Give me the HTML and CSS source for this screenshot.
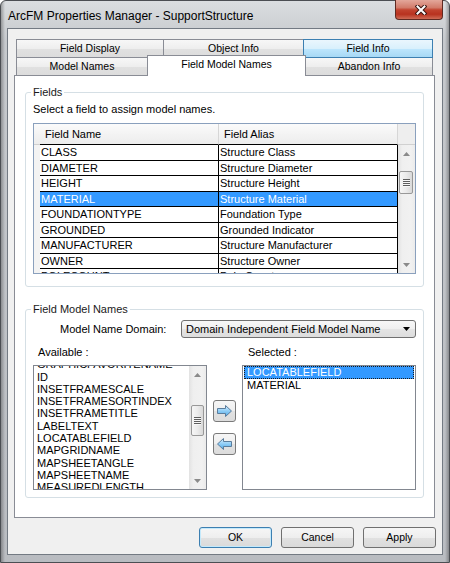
FILE: index.html
```html
<!DOCTYPE html>
<html>
<head>
<meta charset="utf-8">
<title>ArcFM Properties Manager</title>
<link rel="stylesheet" href="styles.css">
</head>
<body>
<div class="window">
  <div class="titlebar">
    <div class="title">ArcFM Properties Manager - SupportStructure</div>
    <div class="close">
      <svg width="12" height="10" viewBox="0 0 12 10">
        <path d="M2.5 1.5 L9.5 8.5 M9.5 1.5 L2.5 8.5" stroke="#3a1510" stroke-width="4" stroke-linecap="square"/>
        <path d="M2.5 1.5 L9.5 8.5 M9.5 1.5 L2.5 8.5" stroke="#ffffff" stroke-width="2" stroke-linecap="square"/>
      </svg>
    </div>
  </div>
  <div class="client">
    <div class="tabs">
      <div class="tabrow">
        <div class="tab t-fd">Field Display</div>
        <div class="tab t-oi">Object Info</div>
        <div class="tab t-fi hot">Field Info</div>
      </div>
      <div class="tabrow row2">
        <div class="tab t-mn">Model Names</div>
        <div class="tab t-fmn sel">Field Model Names</div>
        <div class="tab t-ai">Abandon Info</div>
      </div>
    </div>
    <div class="panel">
      <fieldset class="group g-fields">
        <legend>Fields</legend>
        <div class="hint">Select a field to assign model names.</div>
        <div class="grid">
          <div class="ghead">
            <div class="rh"></div>
            <div class="hc c1">Field Name</div>
            <div class="hc c2">Field Alias</div>
            <div class="hfill"></div>
          </div>
          <div class="gbody">
            <div class="rows">
              <div class="row"><div class="rh"></div><div class="cell c1">CLASS</div><div class="cell c2">Structure Class</div></div>
              <div class="row"><div class="rh"></div><div class="cell c1">DIAMETER</div><div class="cell c2">Structure Diameter</div></div>
              <div class="row"><div class="rh"></div><div class="cell c1">HEIGHT</div><div class="cell c2">Structure Height</div></div>
              <div class="row on"><div class="rh"></div><div class="cell c1">MATERIAL</div><div class="cell c2">Structure Material</div></div>
              <div class="row"><div class="rh"></div><div class="cell c1">FOUNDATIONTYPE</div><div class="cell c2">Foundation Type</div></div>
              <div class="row"><div class="rh"></div><div class="cell c1">GROUNDED</div><div class="cell c2">Grounded Indicator</div></div>
              <div class="row"><div class="rh"></div><div class="cell c1">MANUFACTURER</div><div class="cell c2">Structure Manufacturer</div></div>
              <div class="row"><div class="rh"></div><div class="cell c1">OWNER</div><div class="cell c2">Structure Owner</div></div>
              <div class="row"><div class="rh"></div><div class="cell c1">POLECOUNT</div><div class="cell c2">Pole Count</div></div>
            </div>
            <div class="vsb">
              <div class="sb-btn"><svg width="7" height="4" viewBox="0 0 7 4"><polygon points="0,4 3.5,0 7,4" fill="#8a8a8a"/></svg></div>
              <div class="sb-track"><div class="thumb"><div class="grip"></div></div></div>
              <div class="sb-btn"><svg width="7" height="4" viewBox="0 0 7 4"><polygon points="0,0 7,0 3.5,4" fill="#8a8a8a"/></svg></div>
            </div>
          </div>
        </div>
      </fieldset>
      <fieldset class="group g-models">
        <legend>Field Model Names</legend>
        <div class="domain-row">
          <span class="domain-label">Model Name Domain:</span>
          <div class="combo">
            <span class="combo-text">Domain Independent Field Model Name</span>
            <svg width="7" height="4" viewBox="0 0 7 4"><polygon points="0,0 7,0 3.5,4" fill="#000"/></svg>
          </div>
        </div>
        <div class="labels">
          <div class="lbl-av">Available :</div>
          <div class="lbl-sel">Selected :</div>
        </div>
        <div class="lists">
          <div class="listbox avail">
            <div class="items">
              <div class="item first">GRAPHICFAVORITENAME</div>
              <div class="item">ID</div>
              <div class="item">INSETFRAMESCALE</div>
              <div class="item">INSETFRAMESORTINDEX</div>
              <div class="item">INSETFRAMETITLE</div>
              <div class="item">LABELTEXT</div>
              <div class="item">LOCATABLEFIELD</div>
              <div class="item">MAPGRIDNAME</div>
              <div class="item">MAPSHEETANGLE</div>
              <div class="item">MAPSHEETNAME</div>
              <div class="item">MEASUREDLENGTH</div>
            </div>
            <div class="vsb">
              <div class="sb-btn"><svg width="7" height="4" viewBox="0 0 7 4"><polygon points="0,4 3.5,0 7,4" fill="#8a8a8a"/></svg></div>
              <div class="sb-track"><div class="thumb"><div class="grip"></div></div></div>
              <div class="sb-btn"><svg width="7" height="4" viewBox="0 0 7 4"><polygon points="0,0 7,0 3.5,4" fill="#8a8a8a"/></svg></div>
            </div>
          </div>
          <div class="movers">
            <div class="mv">
              <svg width="17" height="12" viewBox="0 0 17 12">
                <defs>
                  <linearGradient id="ag" x1="0" y1="0" x2="0" y2="1">
                    <stop offset="0" stop-color="#d8f0ff"/>
                    <stop offset="0.5" stop-color="#8fcdf6"/>
                    <stop offset="1" stop-color="#4ea8e6"/>
                  </linearGradient>
                </defs>
                <polygon points="1.5,3.5 9.5,3.5 9.5,0.5 15.5,6 9.5,11.5 9.5,8.5 1.5,8.5" fill="url(#ag)" stroke="#5b7d9c" stroke-width="1" stroke-linejoin="round"/>
              </svg>
            </div>
            <div class="mv">
              <svg width="17" height="12" viewBox="0 0 17 12">
                <polygon points="15.5,3.5 7.5,3.5 7.5,0.5 1.5,6 7.5,11.5 7.5,8.5 15.5,8.5" fill="url(#ag)" stroke="#5b7d9c" stroke-width="1" stroke-linejoin="round"/>
              </svg>
            </div>
          </div>
          <div class="listbox chosen">
            <div class="items">
              <div class="item on">LOCATABLEFIELD</div>
              <div class="item">MATERIAL</div>
            </div>
          </div>
        </div>
      </fieldset>
    </div>
    <div class="buttons">
      <div class="btn default">OK</div>
      <div class="btn">Cancel</div>
      <div class="btn">Apply</div>
    </div>
  </div>
</div>
</body>
</html>
```
FILE: styles.css
```css
* { box-sizing: border-box; }
html, body { margin: 0; padding: 0; }
body {
  width: 450px;
  height: 563px;
  overflow: hidden;
  font-family: "Liberation Sans", Arial, sans-serif;
  font-size: 11px;
  color: #000;
  background: #ffffff;
}

.window {
  width: 450px;
  height: 563px;
  border: 1px solid #4b4e53;
  border-radius: 6px 6px 0 0;
  padding: 0 6px 7px;
  display: flex;
  flex-direction: column;
  background:
    linear-gradient(to right, rgba(0,0,0,0.28), rgba(0,0,0,0) 4px, rgba(0,0,0,0) calc(100% - 4px), rgba(0,0,0,0.28)),
    linear-gradient(#dadde0, #c6c9cd 40px, #b9bcc1);
}

.titlebar {
  height: 27px;
  flex: none;
  display: flex;
  align-items: flex-start;
}
.title {
  margin: 8px 0 0 1px;
  font-size: 12px;
  line-height: 14px;
  color: #000;
}
.close {
  margin: -1px 0 0 auto;
  width: 48px;
  height: 20px;
  border: 1px solid #5e2a22;
  border-top: none;
  border-radius: 0 0 4px 4px;
  background: linear-gradient(#e3a79b 0%, #d27b6a 40%, #c2432f 52%, #b8321f 75%, #cf6b55 100%);
  display: flex;
  align-items: center;
  justify-content: center;
  padding-left: 3px;
}

.client {
  flex: 1;
  background: #f0f0f0;
  border: 1px solid #737a83;
  padding: 10px 6px 0 6px;
}

.tabs {
  margin-left: 2px;
  width: 417px;
}
.tabrow {
  display: flex;
  height: 19px;
}
.row2 { margin-top: -1px; }
.tab {
  height: 19px;
  flex: none;
  border: 1px solid #898c95;
  line-height: 17px;
  text-align: center;
  font-size: 10.5px;
  background: linear-gradient(#f7f7f7, #eeeeee 50%, #e1e1e1 51%, #dcdcdc);
}
.tab + .tab { margin-left: -1px; }
.t-fd { width: 148px; }
.t-oi { width: 141px; }
.t-fi { width: 130px; }
.t-mn { width: 132px; }
.t-fmn { width: 159px; }
.t-ai { width: 128px; }
.hot {
  position: relative;
  z-index: 1;
  border-color: #3c7fb1;
  background: linear-gradient(#eaf6fd, #d9f0fc 50%, #bee6fd 51%, #a7d9f5);
}
.sel {
  position: relative;
  z-index: 2;
  height: 21px;
  margin-top: -2px;
  border-bottom: none;
  background: #ffffff;
}

.panel {
  width: 421px;
  height: 443px;
  margin-top: -1px;
  background: #ffffff;
  border: 1px solid #898c95;
}

.group {
  margin: 10px 10px 0;
  padding: 0 7px;
  border: 1px solid #d5dfe5;
  border-radius: 3px;
  min-width: 0;
}
.group legend {
  padding: 0 2px;
  margin-left: -2px;
  font-size: 11px;
  line-height: 13px;
  color: #1a1a1a;
}
.g-fields { padding-bottom: 12px; }
.g-models { margin-top: 16px; padding-bottom: 7px; }

.hint {
  margin-top: 4px;
  line-height: 13px;
}

.grid {
  margin-top: 7px;
  height: 151px;
  border: 1px solid #8aa0bd;
  display: flex;
  flex-direction: column;
  background: #ffffff;
}
.ghead {
  height: 21px;
  flex: none;
  display: flex;
  background: linear-gradient(#fbfbfb, #f2f2f2 55%, #ececec);
}
.rh { width: 6px; flex: none; }
.ghead .rh { border-bottom: 1px solid #d0d0d0; }
.hc {
  line-height: 20px;
  border-bottom: 1px solid #000;
  border-right: 1px solid #d6d6d6;
  padding-left: 5px;
}
.c1 { width: 179px; flex: none; }
.c2 { width: 179px; flex: none; }
.hfill { flex: 1; border-bottom: 1px solid #d0d0d0; background: #eeeeee; }

.gbody {
  flex: 1;
  min-height: 0;
  display: flex;
}
.rows {
  flex: 1;
  overflow: hidden;
}
.row {
  display: flex;
  height: 15.5px;
}
.row .rh { background: #f3f3f3; }
.cell {
  border-right: 1px solid #000;
  border-bottom: 1px solid #000;
  line-height: 14.5px;
  padding-left: 1px;
  white-space: nowrap;
  overflow: hidden;
}
.row.on .cell {
  background: #3399ff;
  color: #ffffff;
}

.vsb {
  width: 17px;
  flex: none;
  display: flex;
  flex-direction: column;
  background: linear-gradient(to right, #e2e2e2, #efefef 25%, #f1f1f1 75%, #ebebeb);
}
.sb-btn {
  height: 17px;
  flex: none;
  display: flex;
  align-items: center;
  justify-content: center;
}
.sb-track { flex: 1; min-height: 0; }
.thumb {
  margin: 9px 2px 0 1px;
  height: 23px;
  border: 1px solid #989898;
  border-radius: 2px;
  background: linear-gradient(to right, #f6f6f6, #ebebeb 50%, #d9d9d9);
  display: flex;
  align-items: center;
  justify-content: center;
}
.grip {
  width: 7px;
  height: 8px;
  background: repeating-linear-gradient(#5e5e5e 0 1px, #f8f8f8 1px 2px);
}
.avail .thumb {
  margin: 22px 2px 0 2px;
  height: 31px;
}

.domain-row {
  display: flex;
  align-items: center;
  margin-top: 4px;
  height: 18px;
}
.domain-label {
  margin-left: 27px;
  line-height: 18px;
}
.combo {
  margin-left: auto;
  width: 235px;
  height: 18px;
  border: 1px solid #707070;
  border-radius: 3px;
  background: linear-gradient(#f7f7f7, #efefef 50%, #e4e4e4 51%, #dddddd);
  display: flex;
  align-items: center;
  padding: 0 5px 0 4px;
}
.combo-text {
  flex: 1;
  line-height: 16px;
  white-space: nowrap;
}

.labels {
  display: flex;
  margin-top: 8px;
  line-height: 13px;
}
.lbl-av { width: 209px; padding-left: 5px; }
.lbl-sel { padding-left: 6px; }

.lists {
  display: flex;
  gap: 6px;
  margin-top: 6px;
  height: 125px;
}
.listbox {
  width: 174px;
  height: 125px;
  flex: none;
  border: 1px solid #828790;
  background: #ffffff;
  display: flex;
  overflow: hidden;
}
.listbox .items {
  flex: 1;
  min-width: 0;
  overflow: hidden;
}
.avail .items { padding-left: 3px; }
.avail .item {
  line-height: 12.3px;
  height: 12.3px;
  white-space: nowrap;
}
.avail .item.first { margin-top: -7.75px; }
.chosen .items { padding: 0 1px; }
.chosen .item {
  height: 12.6px;
  line-height: 12.6px;
  padding-left: 3px;
  white-space: nowrap;
}
.chosen .item.on {
  background: #3399ff;
  color: #ffffff;
  outline: 1px dotted #1a1a1a;
  outline-offset: -1px;
}

.movers {
  width: 23px;
  flex: none;
  display: flex;
  flex-direction: column;
  justify-content: center;
  gap: 11px;
}
.mv {
  height: 22px;
  border: 1px solid #7a7a7a;
  border-radius: 3px;
  background: linear-gradient(#f6f6f6, #eeeeee 50%, #e2e2e2 51%, #dcdcdc);
  display: flex;
  align-items: center;
  justify-content: center;
}

.buttons {
  display: flex;
  justify-content: flex-end;
  gap: 9px;
  margin-top: 9px;
}
.btn {
  width: 73px;
  height: 21px;
  border: 1px solid #707070;
  border-radius: 3px;
  background: linear-gradient(#f6f6f6, #eeeeee 50%, #e1e1e1 51%, #dadada);
  text-align: center;
  line-height: 19px;
  font-size: 10.5px;
}
.btn.default {
  border-color: #3c7fb1;
  box-shadow: inset 0 0 0 1px #c4e9fb;
}
```
